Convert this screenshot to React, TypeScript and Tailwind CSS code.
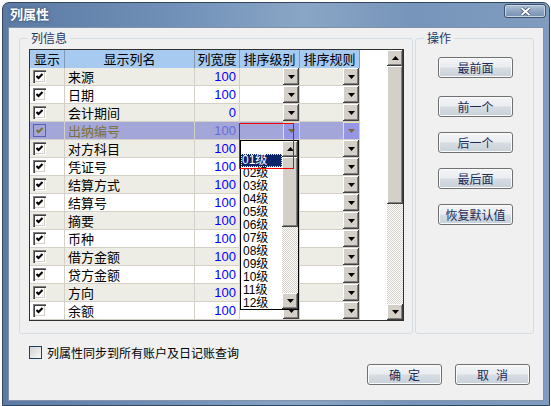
import React from 'react'

interface Row {
  name: string
  width: string
}

const rows: Row[] = [
  { name: '来源', width: '100' },
  { name: '日期', width: '100' },
  { name: '会计期间', width: '0' },
  { name: '出纳编号', width: '100' },
  { name: '对方科目', width: '100' },
  { name: '凭证号', width: '100' },
  { name: '结算方式', width: '100' },
  { name: '结算号', width: '100' },
  { name: '摘要', width: '100' },
  { name: '币种', width: '100' },
  { name: '借方金额', width: '100' },
  { name: '贷方金额', width: '100' },
  { name: '方向', width: '100' },
  { name: '余额', width: '100' },
]

const levels = ['01级', '02级', '03级', '04级', '05级', '06级', '07级', '08级', '09级', '10级', '11级', '12级']

const SELECTED = 3

function Tri({ up = false, color = '#000' }: { up?: boolean; color?: string }) {
  return (
    <svg width="7" height="4" viewBox="0 0 7 4" className="block">
      <polygon points={up ? '0,4 7,4 3.5,0' : '0,0 7,0 3.5,4'} fill={color} />
    </svg>
  )
}

function ClassicBtn({ up = false, className = '' }: { up?: boolean; className?: string }) {
  return (
    <div
      className={`w-[16px] bg-[#d4d0c8] shadow-[inset_-1px_-1px_0_#404040,inset_1px_1px_0_#ffffff,inset_-2px_-2px_0_#808080] flex items-center justify-center ${className}`}
    >
      <Tri up={up} />
    </div>
  )
}

function Check({ selected = false }: { selected?: boolean }) {
  return (
    <div
      className={
        selected
          ? 'w-[13px] h-[13px] border border-[#5a60b8] bg-[#a3a6d9] flex items-center justify-center'
          : 'w-[13px] h-[13px] bg-white shadow-[inset_1px_1px_0_#808080,inset_2px_2px_0_#404040,inset_-1px_-1px_0_#ffffff,inset_-2px_-2px_0_#d4d0c8] flex items-center justify-center'
      }
    >
      <svg width="7" height="7" viewBox="0 0 7 7" className="block">
        <polyline points="0.5,3 2.5,5 6.5,1" fill="none" stroke={selected ? '#7c7138' : '#000'} strokeWidth="2" />
      </svg>
    </div>
  )
}

function DialogButton({ children }: { children: React.ReactNode }) {
  return (
    <div className="w-[75px] h-[21px] rounded-[3px] border border-[#707070] bg-[linear-gradient(#f3f5f7_0%,#eaedf0_48%,#d7dde3_52%,#c8d0d8_100%)] shadow-[inset_0_0_0_1px_#fafbfc] flex items-center justify-center gap-[7px] text-[12px] leading-none text-[#1b2b58]">
      {children}
    </div>
  )
}

const checker =
  'bg-[repeating-conic-gradient(#d4d0c8_0%_25%,#ffffff_0%_50%)] [background-size:2px_2px]'

export default function App() {
  return (
    <div className="w-[551px] h-[406px] bg-white overflow-hidden font-['Noto_Sans_CJK_SC',sans-serif]">
      <div className="ml-[2px] mt-[2px] w-[548px] h-[404px] rounded-t-[7px] border border-[#33465f] bg-[linear-gradient(90deg,#5b7ba4_0%,#6f8fb7_30%,#8aa6c6_55%,#7795ba_75%,#7f9cc0_100%)] flex flex-col">
        {/* 标题栏 */}
        <div className="h-[24px] flex items-start justify-between pl-[7px] pr-[3px]">
          <div className="mt-[3px] text-[13px] leading-[16px] font-bold text-white [text-shadow:0_0_3px_#2c3e57]">
            列属性
          </div>
          <div className="mt-[1px] w-[42px] h-[14px] rounded-[3px] border border-[#3e516b] bg-[linear-gradient(#b3c3d6,#8ea6c3_50%,#7590b2)] shadow-[inset_0_0_0_1px_#c9d6e4] flex items-center justify-center">
            <svg width="11" height="9" viewBox="0 0 11 9" className="block">
              <path d="M1.5 1 L9.5 8 M9.5 1 L1.5 8" stroke="#3b4d66" strokeWidth="3.4" />
              <path d="M1.5 1 L9.5 8 M9.5 1 L1.5 8" stroke="#ffffff" strokeWidth="2" />
            </svg>
          </div>
        </div>

        {/* 客户区 */}
        <div className="mx-[5px] mb-[4px] flex-1 bg-[#f0f0f0] border border-[#8193aa] flex flex-col">
          <div className="flex gap-[2px] pl-[10px] pt-[10px]">
            {/* 列信息 */}
            <div className="relative w-[394px] h-[296px] border border-[#d3dbe3] rounded-[3px] pl-[9px] pt-[10px]">
              <div className="absolute left-[8px] top-[-8px] px-[3px] h-[14px] leading-[14px] bg-[#f0f0f0] text-[12px] text-[#1e3764]">
                列信息
              </div>

              <div className="w-[375px] h-[272px] border border-[#303030] bg-white flex">
                <div className="relative w-[357px] h-full">
                  {/* 表头 */}
                  <div className="flex w-[330px] h-[18px] text-[13px] leading-[18px] text-black bg-[#a6caf0]">
                    <div className="w-[35px] border-r border-[#7f98b8] text-center">显示</div>
                    <div className="w-[130px] border-r border-[#7f98b8] text-center">显示列名</div>
                    <div className="w-[45px] border-r border-[#7f98b8] text-center">列宽度</div>
                    <div className="w-[60px] border-r border-[#7f98b8] text-center">排序级别</div>
                    <div className="w-[60px] border-r border-[#7f98b8] text-center">排序规则</div>
                  </div>

                  {rows.map((row, i) => {
                    const selected = i === SELECTED
                    const bg = selected ? 'bg-[#a3a6d9]' : i % 2 === 0 ? 'bg-[#eeede5]' : 'bg-white'
                    return (
                      <div key={row.name} className={`flex w-[330px] h-[18px] border-b border-[#d4d0c8] text-[13px] leading-[17px] ${bg}`}>
                        <div className="w-[35px] border-r border-[#d4d0c8] flex items-center pl-[3px]">
                          <Check selected={selected} />
                        </div>
                        <div className={`w-[130px] border-r border-[#d4d0c8] pl-[3px] ${selected ? 'text-[#7c7138]' : 'text-black'}`}>
                          {row.name}
                        </div>
                        <div
                          className={`w-[45px] border-r border-[#d4d0c8] pr-[3px] text-right font-['Liberation_Sans',sans-serif] ${
                            selected ? 'text-[#6b6bd6]' : 'text-[#0000ff]'
                          }`}
                        >
                          {row.width}
                        </div>
                        <div className="w-[60px] border-r border-[#d4d0c8] flex justify-end">
                          {selected ? (
                            <div className="w-[16px] bg-[#9597e6] border-l border-t border-[#e8e2b0] flex items-center justify-center">
                              <Tri color="#7c6a30" />
                            </div>
                          ) : (
                            <ClassicBtn />
                          )}
                        </div>
                        <div className="w-[60px] border-r border-[#d4d0c8] flex justify-end">
                          {selected ? (
                            <div className="w-[16px] bg-[#9597e6] border-l border-t border-[#e8e2b0] flex items-center justify-center">
                              <Tri color="#7c6a30" />
                            </div>
                          ) : (
                            <ClassicBtn />
                          )}
                        </div>
                      </div>
                    )
                  })}

                  {/* 下拉列表 */}
                  <div className="absolute left-[210px] top-[90px] w-[59px] h-[170px] border border-black bg-white flex z-10">
                    <div className="w-[41px] overflow-hidden font-['Liberation_Sans','Noto_Sans_CJK_SC',sans-serif] text-[12px] leading-[13px] text-black">
                      <div className="h-[13px]" />
                      {levels.map((lv, i) => (
                        <div
                          key={lv}
                          className={
                            i === 0
                              ? 'h-[13px] pl-[1px] bg-[#0a246a] text-white outline-1 outline-dotted outline-[#f2f0b0] -outline-offset-1'
                              : 'h-[13px] pl-[2px]'
                          }
                        >
                          {lv}
                        </div>
                      ))}
                    </div>
                    <div className="w-[16px] flex flex-col">
                      <ClassicBtn up className="h-[16px]" />
                      <div className="h-[70px] bg-[#d4d0c8] shadow-[inset_-1px_-1px_0_#404040,inset_1px_1px_0_#ffffff,inset_-2px_-2px_0_#808080]" />
                      <div className={`flex-1 ${checker}`} />
                      <ClassicBtn className="h-[16px]" />
                    </div>
                  </div>

                  {/* 当前单元格 */}
                  <div className="absolute left-[209px] top-[73px] w-[55px] h-[46px] border border-[#f00000] z-20" />
                </div>

                {/* 滚动条 */}
                <div className="w-[16px] h-full flex flex-col">
                  <ClassicBtn up className="h-[16px]" />
                  <div className="h-[138px] bg-[#d4d0c8] shadow-[inset_-1px_-1px_0_#404040,inset_1px_1px_0_#ffffff,inset_-2px_-2px_0_#808080]" />
                  <div className={`flex-1 ${checker}`} />
                  <ClassicBtn className="h-[16px]" />
                </div>
              </div>
            </div>

            {/* 操作 */}
            <div className="relative w-[119px] h-[296px] border border-[#d3dbe3] rounded-[3px] pl-[22px] pt-[18px] flex flex-col">
              <div className="absolute left-[8px] top-[-8px] px-[3px] h-[14px] leading-[14px] bg-[#f0f0f0] text-[12px] text-[#1e3764]">
                操作
              </div>
              <DialogButton>最前面</DialogButton>
              <div className="mt-[18px]">
                <DialogButton>前一个</DialogButton>
              </div>
              <div className="mt-[15px]">
                <DialogButton>后一个</DialogButton>
              </div>
              <div className="mt-[15px]">
                <DialogButton>最后面</DialogButton>
              </div>
              <div className="mt-[15px]">
                <DialogButton>恢复默认值</DialogButton>
              </div>
            </div>
          </div>

          {/* 同步选项 */}
          <div className="mt-[12px] ml-[20px] flex items-center gap-[5px] h-[13px]">
            <div className="w-[13px] h-[13px] border border-[#1f3f6b] bg-[linear-gradient(135deg,#d4d4d4,#f8f8f8)]" />
            <div className="text-[12px] leading-[13px] text-black">列属性同步到所有账户及日记账查询</div>
          </div>

          {/* 确定 / 取消 */}
          <div className="mt-[5px] flex justify-end gap-[13px] pr-[13px]">
            <DialogButton>
              <span>确</span>
              <span>定</span>
            </DialogButton>
            <DialogButton>
              <span>取</span>
              <span>消</span>
            </DialogButton>
          </div>
        </div>
      </div>
    </div>
  )
}
